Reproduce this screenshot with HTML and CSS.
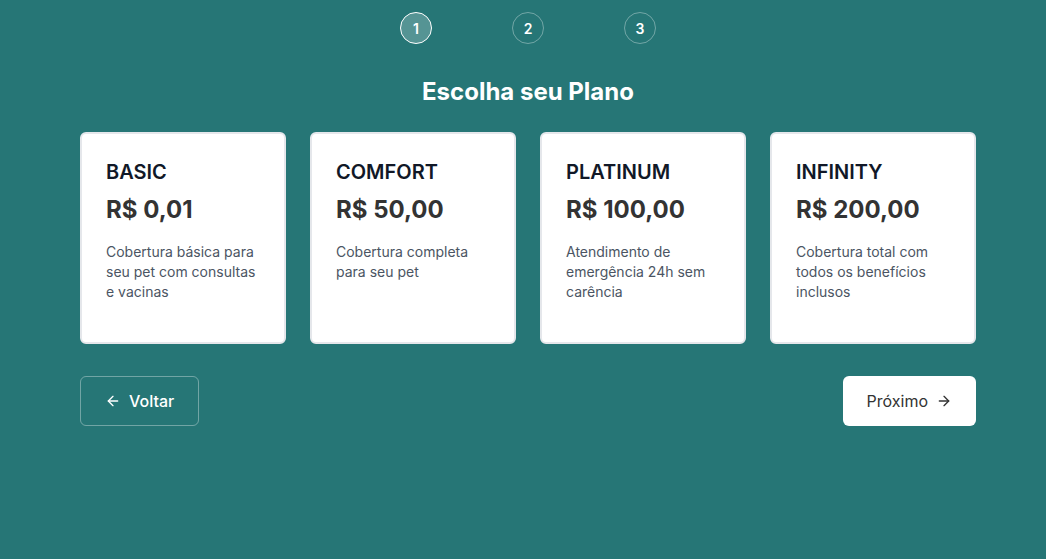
FILE: index.html
```html
<!DOCTYPE html>
<html lang="pt-BR">
<head>
<meta charset="utf-8">
<link rel="stylesheet" href="styles.css">
</head>
<body>
<div class="page">
  <div class="steps">
    <div class="step active">1</div>
    <div class="step">2</div>
    <div class="step">3</div>
  </div>
  <h1 class="title">Escolha seu Plano</h1>
  <div class="plans">
    <div class="card">
      <div class="name">BASIC</div>
      <div class="price">R$ 0,01</div>
      <p class="desc">Cobertura básica para seu pet com consultas e vacinas</p>
    </div>
    <div class="card">
      <div class="name">COMFORT</div>
      <div class="price">R$ 50,00</div>
      <p class="desc">Cobertura completa para seu pet</p>
    </div>
    <div class="card">
      <div class="name">PLATINUM</div>
      <div class="price">R$ 100,00</div>
      <p class="desc">Atendimento de emergência 24h sem carência</p>
    </div>
    <div class="card">
      <div class="name">INFINITY</div>
      <div class="price">R$ 200,00</div>
      <p class="desc">Cobertura total com todos os benefícios inclusos</p>
    </div>
  </div>
  <div class="actions">
    <button class="btn btn-back">
      <svg width="16" height="16" viewBox="0 0 24 24" fill="none" stroke="currentColor" stroke-width="2" stroke-linecap="round" stroke-linejoin="round"><path d="M19 12H5"/><path d="M12 19l-7-7 7-7"/></svg>
      Voltar
    </button>
    <button class="btn btn-next">
      Próximo
      <svg width="16" height="16" viewBox="0 0 24 24" fill="none" stroke="currentColor" stroke-width="2" stroke-linecap="round" stroke-linejoin="round"><path d="M5 12h14"/><path d="M12 5l7 7-7 7"/></svg>
    </button>
  </div>
</div>
</body>
</html>
```
FILE: styles.css
```css
* { box-sizing: border-box; }
html, body {
  margin: 0;
  padding: 0;
  background: #267676;
  font-family: Inter, "Noto Sans", sans-serif;
  height: 100%;
}
.page {
  width: 896px;
  margin-left: 80px;
  padding-top: 12px;
}
.steps {
  display: flex;
  justify-content: center;
  gap: 80px;
}
.step {
  width: 32px;
  height: 32px;
  border-radius: 50%;
  border: 1px solid rgba(255,255,255,0.35);
  color: #fff;
  font-size: 14px;
  font-weight: 600;
  display: flex;
  align-items: center;
  justify-content: center;
}
.step.active {
  background: rgba(255,255,255,0.22);
  border: 1.5px solid #fff;
}
.title {
  margin: 32px 0 0;
  text-align: center;
  color: #fff;
  font-size: 24px;
  font-weight: 700;
  line-height: 32px;
}
.plans {
  margin-top: 24px;
  display: grid;
  grid-template-columns: repeat(4, 1fr);
  gap: 24px;
}
.card {
  background: #fff;
  border: 2px solid #e5e7eb;
  border-radius: 6px;
  height: 212px;
  padding: 24px 24px;
}
.name {
  font-size: 20px;
  font-weight: 600;
  color: #111827;
  line-height: 28px;
}
.price {
  margin-top: 8px;
  font-size: 24px;
  font-weight: 700;
  color: #333;
  line-height: 32px;
}
.desc {
  margin: 16px 0 0;
  font-size: 14px;
  line-height: 20px;
  color: #4b5563;
}
.actions {
  margin-top: 32px;
  display: flex;
  justify-content: space-between;
}
.btn {
  font-family: inherit;
  font-size: 16px;
  height: 50px;
  border-radius: 6px;
  display: flex;
  align-items: center;
  gap: 8px;
  padding: 0 24px;
  cursor: pointer;
}
.btn-back {
  background: transparent;
  border: 1px solid rgba(255,255,255,0.35);
  color: #fff;
  font-weight: 500;
}
.btn-next {
  background: #fff;
  border: none;
  color: #333;
  font-weight: 400;
}
```
